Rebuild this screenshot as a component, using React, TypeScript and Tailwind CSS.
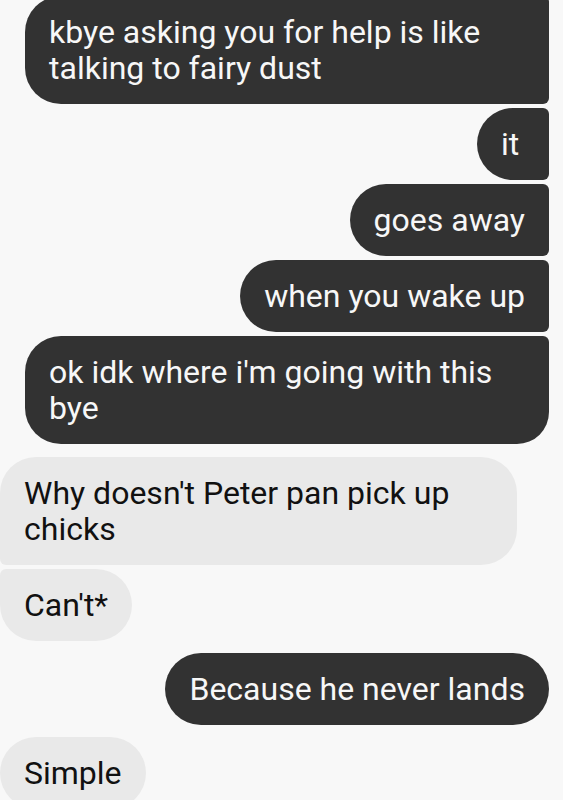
import { clsx } from "clsx";

type Side = "me" | "them";

interface Message {
  id: number;
  side: Side;
  text: string;
  corners: string;
  gap: string;
}

// corners follow the grouping: tight corner where a bubble touches its neighbour
const messages: Message[] = [
  { id: 1, side: "me", text: "kbye asking you for help is like talking to fairy dust", corners: "rounded-r-[6px]", gap: "-mt-1" },
  { id: 2, side: "me", text: "it", corners: "rounded-r-[6px]", gap: "mt-1" },
  { id: 3, side: "me", text: "goes away", corners: "rounded-r-[6px]", gap: "mt-1" },
  { id: 4, side: "me", text: "when you wake up", corners: "rounded-r-[6px]", gap: "mt-1" },
  { id: 5, side: "me", text: "ok idk where i'm going with this bye", corners: "rounded-tr-[6px] rounded-br-[32px]", gap: "mt-1" },
  { id: 6, side: "them", text: "Why doesn't Peter pan pick up chicks", corners: "rounded-bl-[6px]", gap: "mt-[13px]" },
  { id: 7, side: "them", text: "Can't*", corners: "rounded-tl-[6px]", gap: "mt-1" },
  { id: 8, side: "me", text: "Because he never lands", corners: "", gap: "mt-3" },
  { id: 9, side: "them", text: "Simple", corners: "", gap: "mt-3" },
];

const Bubble = ({ side, text, corners, gap }: Message) => {
  return (
    <div className={clsx("flex", side === "me" ? "justify-end" : "justify-start", gap)}>
      <div
        className={clsx(
          "min-w-[72px] rounded-[36px] px-6 pt-[18px] pb-[18px] text-[32px] leading-[36px]",
          side === "me"
            ? "max-w-[524px] bg-[#323232] text-[#f7f7f7]"
            : "max-w-[517px] bg-[#e9e9e9] text-[#111111]",
          corners
        )}
      >
        {text}
      </div>
    </div>
  );
};

export default function App() {
  return (
    <div className="h-[800px] w-full overflow-hidden bg-[#f8f8f8] pr-[14px] font-['Roboto',sans-serif]">
      <div className="flex flex-col">
        {messages.map((m) => (
          <Bubble key={m.id} {...m} />
        ))}
      </div>
    </div>
  );
}
